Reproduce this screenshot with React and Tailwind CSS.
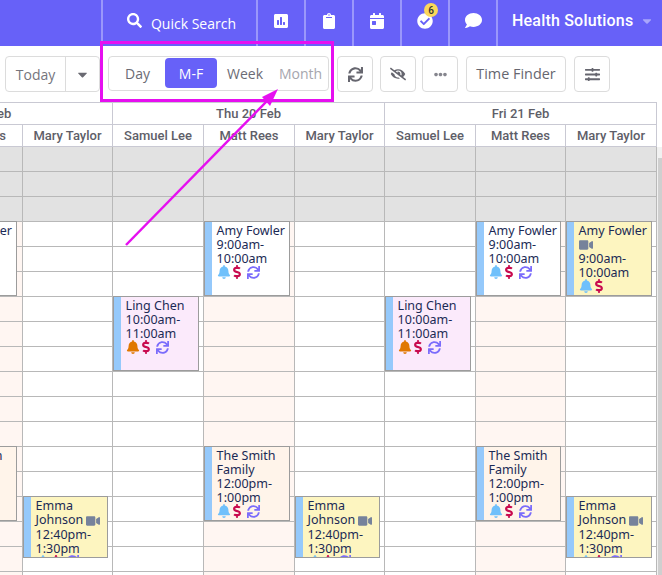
import {
  FaSearch,
  FaPoll,
  FaClipboard,
  FaCalendarDay,
  FaCheckCircle,
  FaComment,
  FaCaretDown,
  FaSync,
  FaEyeSlash,
  FaEllipsisH,
  FaSlidersH,
  FaBell,
  FaDollarSign,
  FaVideo,
} from "react-icons/fa";

const columns = "grid-cols-[23px_90px_91px_91px_90px_91px_90px_91px]";
const people = ["Mary Taylor", "Samuel Lee", "Matt Rees", "Mary Taylor", "Samuel Lee", "Matt Rees", "Mary Taylor"];

const blocked = [0, 1, 2];
const rows = Array.from({ length: 18 }, (_, i) => i);

const pinkCols = [3, 6];

function cellColor(col, row) {
  if (blocked.includes(row)) return "bg-[#e2e2e2]";
  if (col === 0) return "bg-[#fff6f2]";
  if (pinkCols.includes(col)) return "bg-[#fff6f2]";
  return "bg-white";
}

function NavIcon({ children, className = "" }) {
  return (
    <div className={`flex h-full w-12 items-center justify-center border-l-2 border-[#9a97fb] pb-[5px] text-white ${className}`}>
      {children}
    </div>
  );
}

function ToolButton({ children, className = "w-9" }) {
  return (
    <div className={`flex h-9 shrink-0 items-center justify-center rounded border border-[#dcdcdc] text-[#66666f] ${className}`}>
      {children}
    </div>
  );
}

function Appt({ left, top, width, height, bg, name, time, video, bell = "text-[#6fc0fb]", noRepeat, videoInline }) {
  return (
    <div
      className={`absolute flex overflow-hidden border border-[#9c9c9c] font-['Noto_Sans',sans-serif] text-[12.5px] leading-[14px] text-[#1b2a55] ${bg}`}
      style={{ left, top, width, height }}
    >
      <div className="w-[7px] shrink-0 bg-[#95c9fb]" />
      <div className="pl-[4.6px] pt-[2px]">
        <div className="whitespace-pre-line">
          {name}
          {videoInline && <FaVideo className="ml-[3px] inline text-[14px] text-[#76829b]" />}
        </div>
        {video && <FaVideo className="h-[14px] text-[14px] text-[#76829b]" />}
        <div className="whitespace-pre-line">{time}</div>
        <div className="-mt-[1px] flex h-[14px] items-center">
          <FaBell className={`text-[14px] ${bell}`} />
          <FaDollarSign className="-ml-[1px] text-[14px] text-[#c80a4e]" />
          {!noRepeat && <FaSync className="ml-[3px] text-[13px] text-[#7b6cfb]" />}
        </div>
      </div>
    </div>
  );
}

export default function App() {
  return (
    <div className="relative h-[575px] w-[662px] overflow-hidden bg-white font-['Roboto',sans-serif]">
      <header className="flex h-[46px] justify-end bg-[#6761f8]">
        <div className="flex h-full w-[155px] items-center justify-center gap-[9px] border-l-2 border-[#9a97fb] pl-[4px] font-['Open_Sans',sans-serif] text-[14px] text-white">
          <FaSearch className="mb-[5px] text-[15px]" />
          <span>Quick Search</span>
        </div>
        <NavIcon><FaPoll className="text-[16px]" /></NavIcon>
        <NavIcon><FaClipboard className="text-[16px]" /></NavIcon>
        <NavIcon><FaCalendarDay className="text-[16px]" /></NavIcon>
        <NavIcon className="relative">
          <FaCheckCircle className="text-[16px]" />
          <span className="absolute left-[22px] top-[3px] flex h-[14px] w-[14px] items-center justify-center rounded-full bg-[#fbd75b] text-[10px] font-medium text-[#333]">6</span>
        </NavIcon>
        <NavIcon><FaComment className="text-[17px]" /></NavIcon>
        <div className="flex h-full w-[166px] items-center gap-[7px] border-l-2 border-[#9a97fb] pb-[5px] pl-[14px] text-[16px] font-medium tracking-[0.2px] whitespace-nowrap text-white">
          Health Solutions
          <FaCaretDown className="text-[14px] text-[#a9a6fb]" />
        </div>
      </header>

      <div className="flex h-[56px] items-start pl-[5px] pt-[10px]">
        <div className="flex h-9 w-[95px] items-center rounded border border-[#dcdcdc] text-[#75757d]">
          <span className="flex-1 text-center font-['Open_Sans',sans-serif] text-[14px]">Today</span>
          <span className="flex h-full w-[34px] items-center justify-center border-l border-[#dcdcdc]">
            <FaCaretDown className="text-[15px] text-[#6a6a72]" />
          </span>
        </div>
        <div className="ml-2 flex h-[35px] w-[221px] items-center rounded border border-[#dcdcdc] pl-[1px] pb-[1px] font-['Open_Sans',sans-serif] text-[14px] text-[#6b6b75]">
          <span className="w-[55px] text-center">Day</span>
          <span className="flex h-[30px] w-[52px] items-center justify-center rounded-sm bg-[#6761f8] text-white">M-F</span>
          <span className="w-14 text-center">Week</span>
          <span className="flex-1 text-center text-[#a6a6ae]">Month</span>
        </div>
        <div className="ml-2 flex">
          <ToolButton><FaSync className="text-[15px]" /></ToolButton>
          <ToolButton className="ml-[7px] w-9"><FaEyeSlash className="text-[16px]" /></ToolButton>
          <ToolButton className="ml-[6px] w-9"><FaEllipsisH className="text-[13px] text-[#85858d]" /></ToolButton>
          <ToolButton className="ml-2 w-[100px] font-['Open_Sans',sans-serif] text-[14.4px]">Time Finder</ToolButton>
          <ToolButton className="ml-2 w-9"><FaSlidersH className="text-[15px]" /></ToolButton>
        </div>
      </div>

      <div className="relative w-[662px]">
        <div className={`grid ${columns} w-[657px] border-t border-[#c9c9d3] text-[13px] font-medium text-[#5e5e68]`}>
          <div className="flex h-[21px] items-center overflow-hidden border-r border-[#c9c9d3] [grid-column:1/3]">
            <span className="-ml-[10px]">Feb</span>
          </div>
          <div className="flex h-[21px] items-center justify-center border-r border-[#c9c9d3] [grid-column:3/6]">Thu 20 Feb</div>
          <div className="flex h-[21px] items-center justify-center border-r border-[#c9c9d3] [grid-column:6/9]">Fri 21 Feb</div>
        </div>
        <div className={`grid ${columns} w-[657px] border-t border-[#c9c9d3] text-[13px] font-medium text-[#5e5e68]`}>
          <div className="flex h-[22px] items-center justify-end overflow-hidden whitespace-nowrap border-r border-b border-[#c9c9d3] pr-[16px]">s</div>
          {people.map((p, i) => (
            <div key={i} className="flex h-[22px] items-center justify-center whitespace-nowrap border-r border-b border-[#c9c9d3]">{p}</div>
          ))}
        </div>
        <div className={`grid ${columns} w-[657px]`}>
          {rows.map((row) =>
            Array.from({ length: 8 }, (_, col) => (
              <div key={`${row}-${col}`} className={`h-[25px] border-r border-b border-[#b8b8b8] ${cellColor(col, row)}`} />
            ))
          )}
        </div>

        {/* scrollbar */}
        <div className="absolute bottom-0 right-0 top-[45px] w-[5px] bg-[#f1f1f1]">
          <div className="ml-[1px] mt-[11px] h-[460px] bg-[#cfcfcf]" />
        </div>

        {/* events, offsets relative to the calendar */}
        <Appt left={-69} top={119} width={86} height={75} bg="bg-white" name="Amy Fowler" time={"9:00am-\n10:00am"} />
        <Appt left={-69} top={344} width={86} height={75} bg="bg-[#fff4ea]" name={"The Smith\nFamily"} time={"12:00pm-\n1:00pm"} />
        <Appt left={23} top={394} width={85} height={62} bg="bg-[#fdf5c0]" name={"Emma\nJohnson"} videoInline time={"12:40pm-\n1:30pm"} />
        <Appt left={113} top={194} width={86} height={75} bg="bg-[#fbeafb]" bell="text-[#e07800]" name="Ling Chen" time={"10:00am-\n11:00am"} />
        <Appt left={204} top={119} width={86} height={75} bg="bg-white" name="Amy Fowler" time={"9:00am-\n10:00am"} />
        <Appt left={204} top={344} width={86} height={75} bg="bg-[#fff4ea]" name={"The Smith\nFamily"} time={"12:00pm-\n1:00pm"} />
        <Appt left={295} top={394} width={85} height={62} bg="bg-[#fdf5c0]" name={"Emma\nJohnson"} videoInline time={"12:40pm-\n1:30pm"} />
        <Appt left={385} top={194} width={86} height={75} bg="bg-[#fbeafb]" bell="text-[#e07800]" name="Ling Chen" time={"10:00am-\n11:00am"} />
        <Appt left={476} top={119} width={85} height={75} bg="bg-white" name="Amy Fowler" time={"9:00am-\n10:00am"} />
        <Appt left={476} top={344} width={85} height={75} bg="bg-[#fff4ea]" name={"The Smith\nFamily"} time={"12:00pm-\n1:00pm"} />
        <Appt left={566} top={119} width={86} height={75} bg="bg-[#fdf5c0]" noRepeat video name="Amy Fowler" time={"9:00am-\n10:00am"} />
        <Appt left={566} top={394} width={86} height={62} bg="bg-[#fdf5c0]" name={"Emma\nJohnson"} videoInline time={"12:40pm-\n1:30pm"} />
      </div>

      {/* annotation drawn over the page */}
      <div className="absolute left-[100px] top-[41px] h-[61px] w-[234px] border-[3px] border-[#e60ff0]" />
      <svg className="absolute left-0 top-0" width="662" height="575">
        <line x1="126" y1="245" x2="268" y2="100" stroke="#e60ff0" strokeWidth="2.5" />
        <polygon points="278,89 262,97 270,106" fill="#e60ff0" />
      </svg>
    </div>
  );
}
